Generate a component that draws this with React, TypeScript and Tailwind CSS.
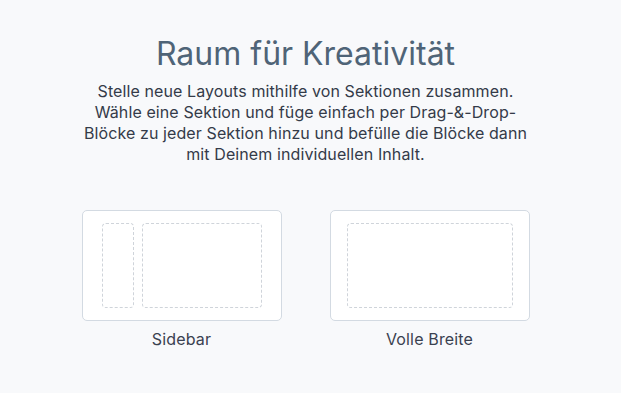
import React from 'react';

function LayoutCard({ label, sidebar }: { label: string; sidebar?: boolean }) {
  return (
    <div className="flex flex-col items-center">
      <div
        className={
          'flex h-[111px] w-[200px] gap-[8px] rounded-[5px] border border-[#d3dae2] bg-white py-[12px] ' +
          (sidebar ? 'px-[19px]' : 'px-[16px]')
        }
      >
        {sidebar && (
          <div className="w-[32px] rounded-[4px] border border-dashed border-[#cfd4da]" />
        )}
        <div className="flex-1 rounded-[4px] border border-dashed border-[#cfd4da]" />
      </div>
      <span className="mt-[7px] text-[16px] leading-[22px] tracking-[0.15px] text-[#3a4150]">
        {label}
      </span>
    </div>
  );
}

export default function App() {
  return (
    <div
      className="h-[393px] w-full bg-[#f8f9fb] pr-[10px] pt-[35px]"
      style={{ fontFamily: 'Inter, "Noto Sans", sans-serif' }}
    >
      <div className="flex flex-col items-center">
        <h1 className="text-[32px] font-normal leading-[38px] text-[#4f6477]">
          Raum für Kreativität
        </h1>
        <p className="mt-[8px] text-center text-[16px] leading-[21px] tracking-[0.1px] text-[#343b49]">
          Stelle neue Layouts mithilfe von Sektionen zusammen.
          <br />
          Wähle eine Sektion und füge einfach per Drag-&amp;-Drop-
          <br />
          Blöcke zu jeder Sektion hinzu und befülle die Blöcke dann
          <br />
          mit Deinem individuellen Inhalt.
        </p>
        <div className="mt-[45px] flex gap-[48px]">
          <LayoutCard label="Sidebar" sidebar />
          <LayoutCard label="Volle Breite" />
        </div>
      </div>
    </div>
  );
}
